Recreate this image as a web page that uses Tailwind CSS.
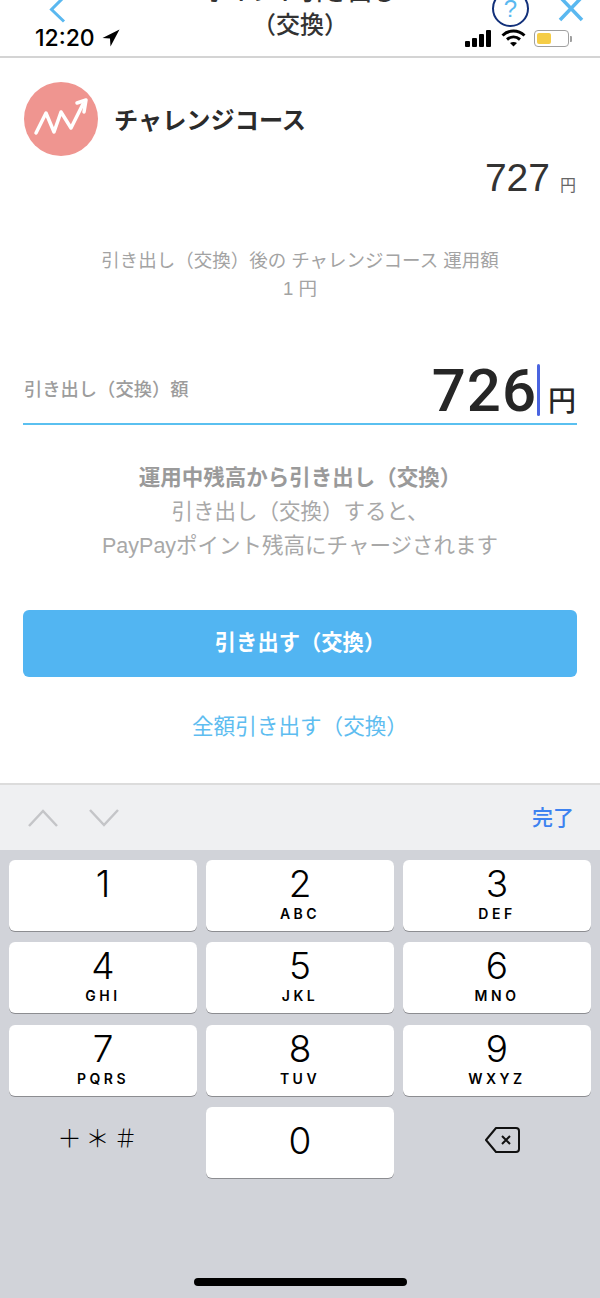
<!DOCTYPE html>
<html lang="ja">
<head>
<meta charset="UTF-8">
<title>引き出し（交換）</title>
<script src="https://cdn.jsdelivr.net/npm/@tailwindcss/browser@4"></script>
</head>
<body class="bg-white">
<div class="w-[600px] h-[1298px] flex flex-col overflow-hidden font-['Liberation_Sans','Noto_Sans_CJK_JP',sans-serif]">

  <!-- nav + status bar -->
  <header class="relative h-[58px] shrink-0 border-b-2 border-[#d4d4d4] overflow-hidden">
    <div class="absolute left-0 right-0 top-[-25px] text-center text-[24px] leading-[33px] font-medium text-[#333]">
      <p>ポイント引き出し</p>
      <p>（交換）</p>
    </div>
    <svg class="absolute left-[48px] top-0" width="20" height="24" viewBox="0 0 20 24" fill="none" stroke="#5ab8f0" stroke-width="3"><path d="M16 -3 L3.500 9.500 L16 21.500"/></svg>
    <div class="absolute left-[492px] top-[-10px] w-[37px] h-[37px] rounded-full border-2 border-[#12307a] flex items-center justify-center text-[24px] leading-none text-[#5ab8f0]">?</div>
    <svg class="absolute left-[558px] top-0" width="26" height="22" viewBox="0 0 26 22" fill="none" stroke="#5ab8f0" stroke-width="3.500"><path d="M2 -3 L24 20 M24 -3 L2 20"/></svg>

    <div class="absolute left-[35px] top-[24px] flex items-center gap-[7px]">
      <span class="font-['Inter'] text-[23px] leading-[28px] font-medium text-black">12:20</span>
      <svg width="18" height="18" viewBox="0 0 18 18" fill="black"><path d="M17.500 0.500 L0.500 9 L8 9.500 L8.500 17.500 Z"/></svg>
    </div>
    <div class="absolute left-[465px] top-[30px] flex items-end gap-[2px] h-[17px]">
      <span class="w-[5px] h-[6px] bg-black rounded-[1px]"></span>
      <span class="w-[5px] h-[9px] bg-black rounded-[1px]"></span>
      <span class="w-[5px] h-[13px] bg-black rounded-[1px]"></span>
      <span class="w-[5px] h-[17px] bg-black rounded-[1px]"></span>
    </div>
    <svg class="absolute left-[501px] top-[29px]" width="25" height="18" viewBox="0 0 25 18" fill="none" stroke="black" stroke-width="3"><path d="M1.500 6.500 C8 0.500 17 0.500 23.500 6.500"/><path d="M6 10.500 C10 7 15 7 19 10.500"/><path d="M12.500 17.500 L9 14 C11 12.500 14 12.500 16 14 Z" fill="black" stroke="none"/></svg>
    <div class="absolute left-[534px] top-[30px] flex items-center">
      <div class="w-[35px] h-[17px] rounded-[4px] border border-[#a0a0a0] p-[2px]">
        <div class="w-[14px] h-full rounded-[2px] bg-[#f5cd47]"></div>
      </div>
      <span class="w-[2px] h-[6px] ml-[1px] rounded-r-[1px] bg-[#a0a0a0]"></span>
    </div>
  </header>

  <!-- content -->
  <main class="h-[725px] shrink-0 px-[24px] pt-[24px]">
    <div class="flex items-center gap-[17px]">
      <svg width="74" height="74" viewBox="0 0 74 74">
        <circle cx="37" cy="37" r="37" fill="#ef9590"/>
        <path d="M12 51 L22 31 L30 50 L37 30 L47 46 L59 22" fill="none" stroke="white" stroke-width="3.500" stroke-linecap="round" stroke-linejoin="round"/>
        <path d="M53 21 L62 18 L60 30" fill="none" stroke="white" stroke-width="3.500" stroke-linecap="round" stroke-linejoin="round"/>
      </svg>
      <h1 class="-ml-px pt-[4px] text-[24.200px] leading-[30px] font-bold text-[#2b2b2b]">チャレンジコース</h1>
    </div>
    <div class="flex justify-end items-baseline gap-[10px] text-[#333]">
      <span class="text-[39px] leading-[44px]">727</span>
      <span class="text-[16px] leading-[20px] text-[#666]">円</span>
    </div>
    <div class="mt-[47px] text-center text-[18.500px] leading-[28px] text-[#a3a3a3]">
      <p>引き出し（交換）後の チャレンジコース 運用額</p>
      <p>1 円</p>
    </div>
    <div class="mt-[46px] flex items-end justify-between h-[76px] border-b-2 border-[#5ac0f0] -mx-px px-px pb-[6px]">
      <span class="text-[18.300px] leading-[26px] font-medium text-[#9c9c9c] mb-[14px]">引き出し（交換）額</span>
      <div class="flex items-end">
        <span class="font-['Roboto'] text-[60px] leading-[62px] font-medium text-[#262626] tracking-[1px] mb-[-5px]">726</span>
        <span class="w-[3px] h-[52px] mb-[1px] bg-[#4a64e0] rounded-full"></span>
        <span class="ml-[8px] mb-[-1px] text-[28px] leading-[32px] font-medium text-[#262626]">円</span>
      </div>
    </div>
    <div class="mt-[36px] text-center text-[21.500px] leading-[34px] text-[#a8a8a8]">
      <p class="font-bold text-[#9a9a9a]">運用中残高から引き出し（交換）</p>
      <p>引き出し（交換）すると、</p>
      <p>PayPayポイント残高にチャージされます</p>
    </div>
    <button class="mt-[47px] -mx-px w-[554px] h-[67px] rounded-[6px] bg-[#52b5f2] text-white text-[21.300px] font-bold">引き出す（交換）</button>
    <p class="mt-[36px] text-center text-[21.600px] leading-[28px] text-[#5ebdf0]">全額引き出す（交換）</p>
  </main>

  <!-- keyboard toolbar -->
  <div class="h-[67px] shrink-0 bg-[#eff0f2] border-t-2 border-[#dcdcdc] flex items-center justify-between pl-[28px] pr-[26px]">
    <div class="flex gap-[31px]">
      <svg width="30" height="18" viewBox="0 0 30 18" fill="none" stroke="#c4c5c8" stroke-width="2.500"><path d="M1 17 L15 2 L29 17"/></svg>
      <svg width="30" height="18" viewBox="0 0 30 18" fill="none" stroke="#c4c5c8" stroke-width="2.500"><path d="M1 1 L15 16 L29 1"/></svg>
    </div>
    <span class="text-[21px] font-medium text-[#3d82f0]">完了</span>
  </div>

  <!-- number pad -->
  <div class="flex-1 bg-[#d1d3d9] flex flex-col">
    <div class="grid grid-cols-3 gap-x-[9px] gap-y-[11.500px] px-[9px] pt-[9.900px] font-['Inter'] text-black">
      <div class="h-[71px] rounded-[6px] bg-white shadow-[0_1px_0_#8c8d91] flex flex-col items-center pt-[2px]"><span class="text-[37px] leading-[44px] font-light">1</span></div>
      <div class="h-[71px] rounded-[6px] bg-white shadow-[0_1px_0_#8c8d91] flex flex-col items-center pt-[2px]"><span class="text-[37px] leading-[44px] font-light">2</span><span class="text-[14px] leading-[16px] font-semibold tracking-[3.500px]">ABC</span></div>
      <div class="h-[71px] rounded-[6px] bg-white shadow-[0_1px_0_#8c8d91] flex flex-col items-center pt-[2px]"><span class="text-[37px] leading-[44px] font-light">3</span><span class="text-[14px] leading-[16px] font-semibold tracking-[3.500px]">DEF</span></div>
      <div class="h-[71px] rounded-[6px] bg-white shadow-[0_1px_0_#8c8d91] flex flex-col items-center pt-[2px]"><span class="text-[37px] leading-[44px] font-light">4</span><span class="text-[14px] leading-[16px] font-semibold tracking-[3.500px]">GHI</span></div>
      <div class="h-[71px] rounded-[6px] bg-white shadow-[0_1px_0_#8c8d91] flex flex-col items-center pt-[2px]"><span class="text-[37px] leading-[44px] font-light">5</span><span class="text-[14px] leading-[16px] font-semibold tracking-[3.500px]">JKL</span></div>
      <div class="h-[71px] rounded-[6px] bg-white shadow-[0_1px_0_#8c8d91] flex flex-col items-center pt-[2px]"><span class="text-[37px] leading-[44px] font-light">6</span><span class="text-[14px] leading-[16px] font-semibold tracking-[3.500px]">MNO</span></div>
      <div class="h-[71px] rounded-[6px] bg-white shadow-[0_1px_0_#8c8d91] flex flex-col items-center pt-[2px]"><span class="text-[37px] leading-[44px] font-light">7</span><span class="text-[14px] leading-[16px] font-semibold tracking-[3.500px]">PQRS</span></div>
      <div class="h-[71px] rounded-[6px] bg-white shadow-[0_1px_0_#8c8d91] flex flex-col items-center pt-[2px]"><span class="text-[37px] leading-[44px] font-light">8</span><span class="text-[14px] leading-[16px] font-semibold tracking-[3.500px]">TUV</span></div>
      <div class="h-[71px] rounded-[6px] bg-white shadow-[0_1px_0_#8c8d91] flex flex-col items-center pt-[2px]"><span class="text-[37px] leading-[44px] font-light">9</span><span class="text-[14px] leading-[16px] font-semibold tracking-[3.500px]">WXYZ</span></div>
      <div class="h-[71px] flex items-center justify-center pb-[12px] pr-[7px] font-['Noto_Sans_CJK_JP'] text-[24px] leading-none font-light tracking-[4px]">＋＊＃</div>
      <div class="h-[71px] rounded-[6px] bg-white shadow-[0_1px_0_#8c8d91] flex items-center justify-center pb-[4px]"><span class="text-[37px] leading-[44px] font-light">0</span></div>
      <div class="h-[71px] flex items-center justify-center pb-[6px] pl-[10px]">
        <svg width="35" height="26" viewBox="0 0 35 26" fill="none" stroke="#111" stroke-width="2" stroke-linejoin="round"><path d="M11 1 H31 Q34 1 34 4 V22 Q34 25 31 25 H11 L1 13 Z"/><path d="M17 9 L25 17 M25 9 L17 17"/></svg>
      </div>
    </div>
    <div class="mt-auto mb-[12px] mx-auto w-[213px] h-[8px] rounded-full bg-black"></div>
  </div>
</div>
</body>
</html>
